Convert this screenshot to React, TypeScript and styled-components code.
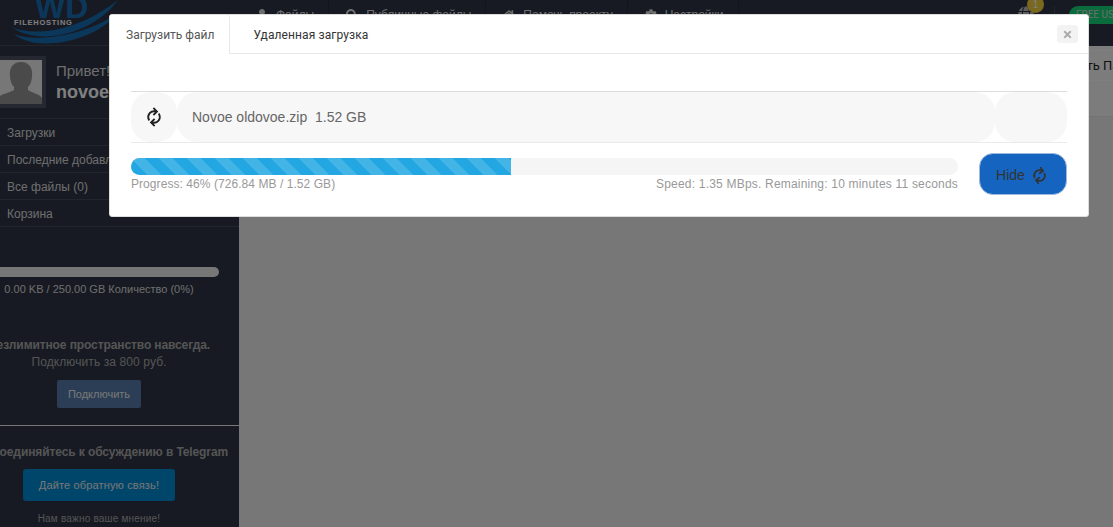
import React from 'react';
import styled, { createGlobalStyle } from 'styled-components';
import { FaUser, FaGlobe, FaHome, FaCog, FaSearch, FaSync, FaTimes } from 'react-icons/fa';

const GlobalStyle = createGlobalStyle`
  html, body {
    margin: 0;
    height: 100%;
    overflow: hidden;
    background: #eeeeee;
    font-family: "Liberation Sans", Arial, sans-serif;
  }
  #root { height: 100%; }
  * { box-sizing: border-box; }
`;

const Page = styled.div`
  display: flex;
  height: 527px;
  width: 1113px;
  overflow: hidden;
  background: #eeeeee;
`;

const Sidebar = styled.aside`
  width: 239px;
  flex: none;
  background: #2e3545;
  overflow: hidden;
`;

const SideInner = styled.div`
  width: 259px;
  margin-left: -20px;
  color: #fff;
`;

const LogoBox = styled.div`
  height: 46px;
  border-bottom: 1px solid #454b58;
  overflow: hidden;
  svg { display: block; margin-left: 20px; }
  text { font-family: "Liberation Sans", Arial, sans-serif; font-weight: 700; }
`;

const Profile = styled.div`
  display: flex;
  align-items: center;
  gap: 10px;
  height: 73px;
  padding-left: 14px;
  border-bottom: 1px solid #454b58;
`;

const Avatar = styled.div`
  width: 52px;
  height: 52px;
  flex: none;
  padding: 4px;
  background: #4a5060;
  svg { display: block; }
`;

const Hello = styled.div`
  font-size: 15px;
  line-height: 19px;
  color: #ddd;
`;

const UserName = styled.div`
  margin-top: 2px;
  font-size: 18px;
  line-height: 21px;
  font-weight: 700;
`;

const SideMenu = styled.ul`
  list-style: none;
  margin: 0;
  padding: 0;
`;

const SideItem = styled.li`
  height: 27px;
  padding: 2px 0 0 27px;
  font-size: 12px;
  line-height: 24px;
  color: #ddd;
  border-bottom: 1px solid #454b58;
  white-space: nowrap;
`;

const CenterBlock = styled.div`
  display: flex;
  flex-direction: column;
  align-items: center;
  width: 238px;
  white-space: nowrap;
`;

const UsageBar = styled.div`
  width: 239px;
  height: 10px;
  margin-top: 40px;
  border-radius: 5px;
  background: #eeeeee;
`;

const UsageText = styled.div`
  margin-top: 5px;
  font-size: 11px;
  line-height: 14px;
  color: #ddd;
`;

const PromoTitle = styled.div`
  margin-top: 41px;
  font-size: 12px;
  line-height: 16px;
  font-weight: 700;
  letter-spacing: -0.1px;
  color: #aaa;
`;

const PromoSub = styled.div`
  margin-top: 1px;
  font-size: 12px;
  line-height: 17px;
  letter-spacing: 0.1px;
  color: #aaa;
`;

const ConnectBtn = styled.div`
  width: 84px;
  height: 28px;
  margin-top: 9px;
  border-radius: 2px;
  background: #567cac;
  color: #eee;
  font-size: 11px;
  line-height: 28px;
  text-align: center;
`;

const Divider = styled.div`
  height: 1px;
  margin-top: 17px;
  background: #eeeeee;
`;

const TelegramTitle = styled(PromoTitle)`
  margin-top: 18px;
`;

const TelegramBtn = styled.div`
  width: 152px;
  height: 32px;
  margin-top: 9px;
  border-radius: 3px;
  background: #008cd4;
  color: #eee;
  font-size: 11px;
  letter-spacing: 0.15px;
  line-height: 32px;
  text-align: center;
`;

const Note = styled.div`
  margin-top: 11px;
  font-size: 10px;
  line-height: 14px;
  letter-spacing: 0.2px;
  color: #aaa;
`;

const Main = styled.main`
  flex: 1;
  min-width: 0;
`;

const TopBar = styled.header`
  display: flex;
  height: 46px;
  background: #2e3545;
  color: #fff;
`;

const TopItem = styled.div`
  display: flex;
  gap: 8px;
  padding: 8px 14px 0 17px;
  font-size: 12px;
  white-space: nowrap;
  border-right: 1px solid #262b38;
  color: #ddd;
  svg { margin-top: 1px; }
`;

const TopRight = styled.div`
  display: flex;
  margin-left: auto;
  padding-top: 6px;
`;

const Globe = styled.div`
  position: relative;
  width: 16px;
  height: 16px;
  margin-right: 20px;
  color: #bbb;
`;

const Badge = styled.span`
  position: absolute;
  top: -10px;
  right: -10px;
  width: 17px;
  height: 17px;
  border-radius: 50%;
  background: #f5d13c;
  color: #fff;
  font-size: 10px;
  line-height: 17px;
  text-align: center;
`;

const TopSep = styled.div`
  width: 1px;
  height: 30px;
  margin-right: 14px;
  background: #454b58;
`;

const Plan = styled.div`
  width: 60px;
  height: 18px;
  padding-left: 7px;
  margin-right: -16px;
  border-radius: 9px 0 0 9px;
  background: #14d678;
  color: #ddd;
  font-family: Roboto, sans-serif;
  font-size: 10px;
  line-height: 18px;
  white-space: nowrap;
`;

const Strip = styled.div`
  height: 5px;
  background: #f8f8f8;
  border-bottom: 1px solid #ffffff;
`;

const SubBar = styled.div`
  height: 30px;
  display: flex;
  justify-content: flex-end;
  align-items: center;
  background: #f8f8f8;
  border-bottom: 1px solid #ffffff;
  color: #222;
  font-family: Roboto, sans-serif;
  font-size: 13px;
  white-space: nowrap;
  overflow: hidden;
`;

const SubLabel = styled.span`
  margin-right: -27px;
`;

const SubRow = styled.div`
  height: 36px;
  background: #f8f8f8;
  border-bottom: 1px solid #e6e6e6;
`;

const Backdrop = styled.div`
  position: fixed;
  inset: 0;
  background: rgba(0, 0, 0, 0.5);
`;

const Modal = styled.div`
  position: fixed;
  left: 109px;
  top: 14px;
  width: 980px;
  height: 203px;
  background: #fff;
  border: 1px solid #ddd;
  border-radius: 3px;
`;

const Tabs = styled.div`
  display: flex;
  height: 39px;
  border-bottom: 1px solid #e8e8e8;
`;

const Tab = styled.div<{ $active?: boolean }>`
  height: ${({ $active }) => ($active ? '39px' : '38px')};
  padding: 0 15px 0 16px;
  font-family: Roboto, sans-serif;
  font-size: 12px;
  line-height: 40px;
  color: ${({ $active }) => ($active ? '#555' : '#333')};
  background: #fff;
  border-right: ${({ $active }) => ($active ? '1px solid #e8e8e8' : '0')};
  border-radius: 0 3px 0 0;
  ${({ $active }) => !$active && 'margin-left: 7px; letter-spacing: 0.1px;'}
`;

const CloseBtn = styled.div`
  position: absolute;
  top: 10px;
  right: 10px;
  display: flex;
  align-items: center;
  justify-content: center;
  width: 21px;
  height: 18px;
  border-radius: 3px;
  background: #f3f3f3;
  color: #aaa;
`;

const Body = styled.div`
  padding: 37px 21px 0;
`;

const FileRow = styled.div`
  display: grid;
  grid-template-columns: 46px 1fr 72px;
  height: 52px;
  border-top: 1px solid #ddd;
  border-bottom: 1px solid #eaeaea;
`;

const Cell = styled.div`
  display: flex;
  align-items: center;
  border-radius: 20px;
  background: #f7f7f7;
  font-size: 14px;
  color: #666;
  white-space: pre;
`;

const IconCell = styled(Cell)`
  justify-content: center;
  color: #222;
  svg { transform: rotate(-45deg); }
`;

const NameCell = styled(Cell)`
  padding-left: 15px;
`;

const ProgressRow = styled.div`
  display: flex;
  gap: 21px;
  padding-top: 10px;
`;

const ProgressCol = styled.div`
  flex: 1;
  min-width: 0;
  padding-top: 5px;
`;

const Track = styled.div`
  height: 17px;
  border-radius: 9px;
  background: #f5f5f5;
  overflow: hidden;
`;

const Fill = styled.div`
  height: 100%;
  background-color: #22a7e2;
  background-image: linear-gradient(45deg, rgba(255,255,255,.15) 25%, transparent 25%, transparent 50%, rgba(255,255,255,.15) 50%, rgba(255,255,255,.15) 75%, transparent 75%, transparent);
  background-size: 28px 28px;
`;

const Stats = styled.div`
  display: flex;
  justify-content: space-between;
  margin-top: 2px;
  font-size: 12px;
  line-height: 14px;
  color: #999;
`;

const Stat = styled.span<{ $spacing: number }>`
  letter-spacing: ${({ $spacing }) => $spacing}px;
`;

const HideBtn = styled.div`
  display: flex;
  align-items: center;
  justify-content: center;
  gap: 8px;
  width: 88px;
  height: 42px;
  padding: 2px 4px 0 0;
  border-radius: 14px;
  border: 1px solid #9db8d8;
  background: #1565c0;
  color: #333;
  font-size: 14px;
  svg { transform: rotate(-35deg); }
`;

const menu = ['Загрузки', 'Последние добавленные', 'Все файлы (0)', 'Корзина'];

const Logo = () => (
  <svg width="130" height="45" viewBox="0 0 130 45">
    <text x="35" y="18" fontSize="32" fill="#1670b5">WD</text>
    <text x="14" y="24.5" fontSize="7.5" letterSpacing="0.75" fill="#fff">FILEHOSTING</text>
    <path d="M12 27 C30 36 75 34 118 0 C92 36 36 46 12 27 Z" fill="#1670b5" />
    <path d="M14 34 C32 42 82 38 118 13 C92 44 34 52 14 34 Z" fill="#1670b5" />
  </svg>
);

const Silhouette = () => (
  <svg width="44" height="44" viewBox="0 0 44 44">
    <rect width="44" height="44" fill="#eeeeee" />
    <path d="M23 2 C15 2 11 8 12 16 C12 21 14 25 16 27 L16 30 C12 33 2 34 0 38 L0 44 L44 44 L44 38 C42 34 34 33 30 30 L30 27 C32 25 34 21 34 16 C35 8 31 2 23 2 Z" fill="#949494" />
  </svg>
);

const App = () => {
  const progress = 46;

  return (
    <>
      <GlobalStyle />
      <Page>
        <Sidebar>
          <SideInner>
            <LogoBox>
              <Logo />
            </LogoBox>
            <Profile>
              <Avatar>
                <Silhouette />
              </Avatar>
              <div>
                <Hello>Привет!</Hello>
                <UserName>novoeoldovoe</UserName>
              </div>
            </Profile>
            <SideMenu>
              {menu.map((item) => (
                <SideItem key={item}>{item}</SideItem>
              ))}
            </SideMenu>
            <CenterBlock>
              <UsageBar />
              <UsageText>0.00 KB / 250.00 GB Количество (0%)</UsageText>
              <PromoTitle>Безлимитное пространство навсегда.</PromoTitle>
              <PromoSub>Подключить за 800 руб.</PromoSub>
              <ConnectBtn>Подключить</ConnectBtn>
            </CenterBlock>
            <Divider />
            <CenterBlock>
              <TelegramTitle>Присоединяйтесь к обсуждению в Telegram</TelegramTitle>
              <TelegramBtn>Дайте обратную связь!</TelegramBtn>
              <Note>Нам важно ваше мнение!</Note>
            </CenterBlock>
          </SideInner>
        </Sidebar>
        <Main>
          <TopBar>
            <TopItem><FaUser size={12} />Файлы</TopItem>
            <TopItem><FaSearch size={12} />Публичные файлы</TopItem>
            <TopItem><FaHome size={12} />Помочь проекту</TopItem>
            <TopItem><FaCog size={12} />Настройки</TopItem>
            <TopRight>
              <Globe>
                <FaGlobe size={16} />
                <Badge>1</Badge>
              </Globe>
              <TopSep />
              <Plan>FREE USER</Plan>
            </TopRight>
          </TopBar>
          <Strip />
          <SubBar><SubLabel>Создать Папку</SubLabel></SubBar>
          <SubRow />
        </Main>
      </Page>
      <Backdrop />
      <Modal>
        <Tabs>
          <Tab $active>Загрузить файл</Tab>
          <Tab>Удаленная загрузка</Tab>
        </Tabs>
        <CloseBtn><FaTimes size={11} /></CloseBtn>
        <Body>
          <FileRow>
            <IconCell><FaSync size={14} /></IconCell>
            <NameCell>Novoe oldovoe.zip  1.52 GB</NameCell>
            <Cell />
          </FileRow>
          <ProgressRow>
            <ProgressCol>
              <Track>
                <Fill style={{ width: `${progress}%` }} />
              </Track>
              <Stats>
                <Stat $spacing={0.06}>Progress: 46% (726.84 MB / 1.52 GB)</Stat>
                <Stat $spacing={0.2}>Speed: 1.35 MBps. Remaining: 10 minutes 11 seconds</Stat>
              </Stats>
            </ProgressCol>
            <HideBtn>Hide <FaSync size={13} /></HideBtn>
          </ProgressRow>
        </Body>
      </Modal>
    </>
  );
};

export default App;
